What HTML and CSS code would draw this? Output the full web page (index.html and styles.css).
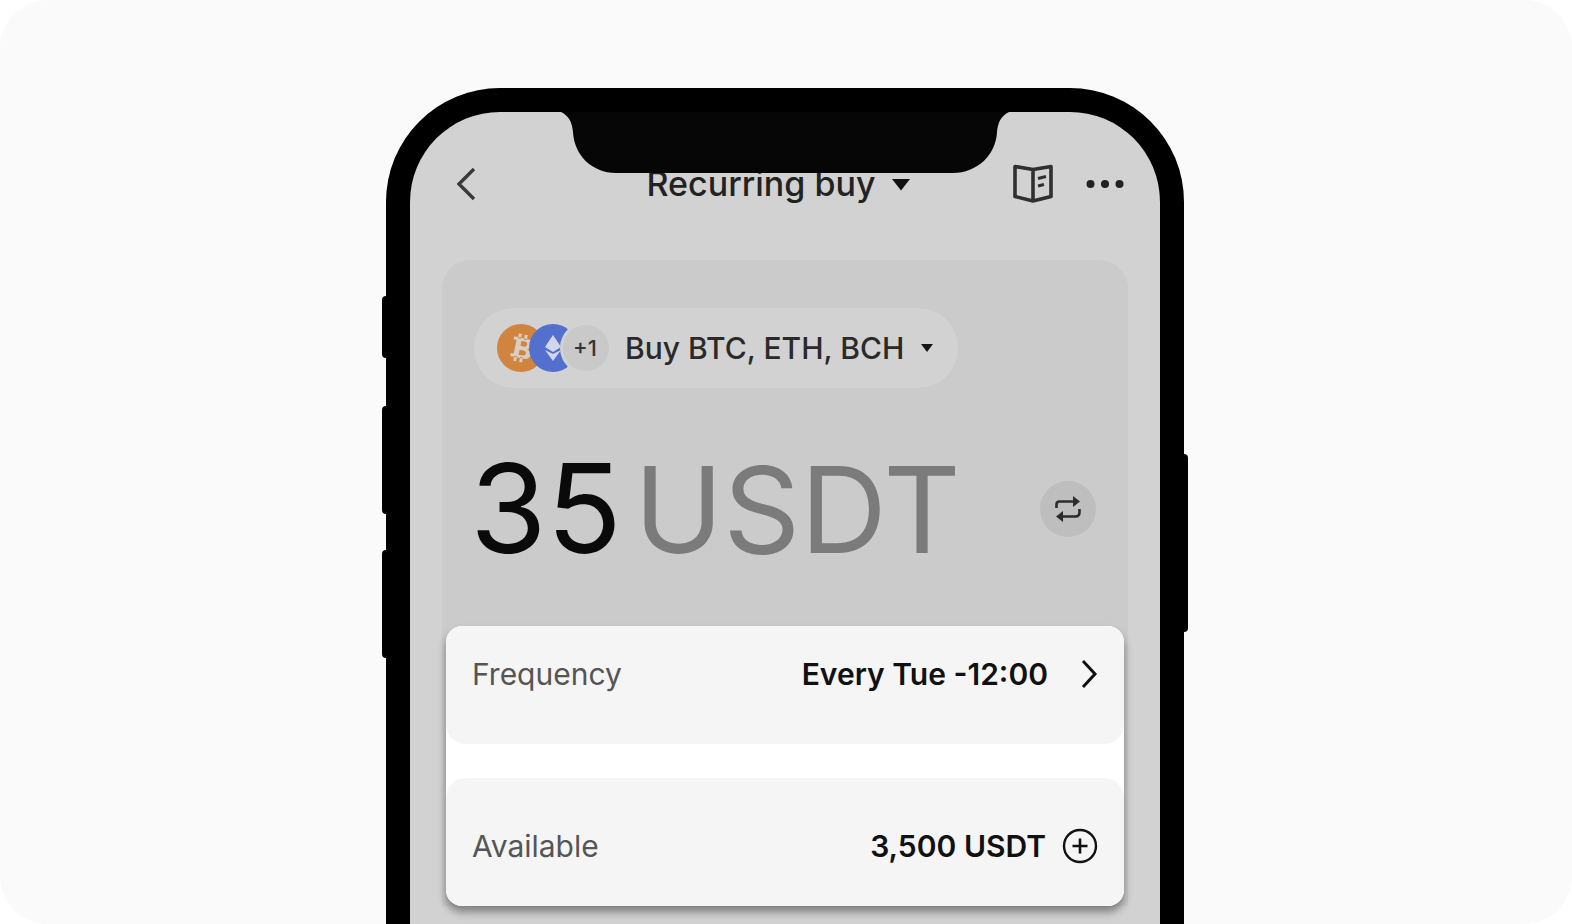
FILE: index.html
```html
<!DOCTYPE html>
<html lang="en">
<head>
<meta charset="utf-8">
<meta name="viewport" content="width=device-width, initial-scale=1">
<title>Recurring buy</title>
<link rel="stylesheet" href="styles.css">
</head>
<body>
<main class="stage">
  <div class="phone">
    <span class="side-key side-key-mute"></span>
    <span class="side-key side-key-up"></span>
    <span class="side-key side-key-down"></span>
    <span class="side-key side-key-power"></span>
    <div class="screen">
      <svg class="notch" viewBox="0 0 448 61" aria-hidden="true"><path d="M0 0C8 4 11 10 12 20C13 43 31 61 55 61H392C416 61 435 43 436 20C437 10 440 4 448 0Z" fill="#060606"/></svg>
      <header class="topbar">
        <button class="icon-button" aria-label="Back">
          <svg width="24" height="36" viewBox="0 0 24 36"><path d="M20 3L5 18L20 33" fill="none" stroke="#3a3a3a" stroke-width="3.400"/></svg>
        </button>
        <button class="title-button">Recurring buy
          <svg width="20" height="13" viewBox="0 0 20 13"><path d="M1 1H19L10 12.500Z" fill="#111"/></svg>
        </button>
        <div class="topbar-actions">
          <button class="icon-button" aria-label="Guide">
            <svg width="42" height="40" viewBox="0 0 42 40"><g fill="none" stroke="#303030" stroke-width="3.600" stroke-linejoin="round"><path d="M21 5.500L3 2.500V32.500L21 37L39 32.500V2.500ZM21 5.500V37"/><path d="M26 14.500L34 12.500M26 22L32 20.500" stroke-width="3.200"/></g></svg>
          </button>
          <button class="icon-button" aria-label="More">
            <svg width="38" height="12" viewBox="0 0 38 12"><g fill="#222"><circle cx="4.500" cy="6" r="4"/><circle cx="19" cy="6" r="4"/><circle cx="33.500" cy="6" r="4"/></g></svg>
          </button>
        </div>
      </header>
      <section class="panel">
        <button class="coin-picker">
          <span class="coins">
            <svg width="114" height="52" viewBox="0 0 114 52" aria-hidden="true">
              <circle cx="26" cy="26" r="24" fill="#d0843f"/>
              <path transform="rotate(12 26 26)" d="M17 16H31C38 16 38 25 32 26C39 27 38 36 31 36H17V33H20V19H17ZM25 19V24H29C32 24 32 19 29 19ZM25 28V33H29C33 33 33 28 29 28ZM21 12H24V17H21ZM27 12H30V17H27ZM21 35H24V40H21ZM27 35H30V40H27Z" fill="#d8cec4" fill-rule="evenodd"/>
              <circle cx="58" cy="26" r="24" fill="#5470cf"/>
              <path d="M58 13L66 25L58 30L50 25ZM50 28L58 32L66 28L58 39Z" fill="#d2d7e8"/>
              <circle cx="91" cy="26" r="26" fill="#d2d2d2"/>
              <circle cx="91" cy="26" r="23" fill="#c9c9c9"/>
            </svg>
            <span class="coin-count">+1</span>
          </span>
          Buy BTC, ETH, BCH
          <svg width="14" height="10" viewBox="0 0 14 10"><path d="M1 1H13L7 9Z" fill="#161616"/></svg>
        </button>
        <div class="amount-row">
          <p class="amount">35<span class="currency">USDT</span></p>
          <button class="swap" aria-label="Switch currency">
            <svg width="30" height="30" viewBox="0 0 30 30"><g fill="none" stroke="#2c2c2c" stroke-width="2.600"><path d="M3.500 14V10.500Q3.500 7.500 6.500 7.500H22M26.500 15V18C26.500 21 25 22.500 22.500 22.500H8"/></g><path d="M20 2L27 7.500L20 13ZM10 17L3 22.500L10 28Z" fill="#2c2c2c"/></svg>
          </button>
        </div>
        <div class="card">
          <div class="row row-frequency">
            <span class="label">Frequency</span>
            <button class="value value-frequency">Every Tue -12:00
              <svg width="18" height="30" viewBox="0 0 18 30"><path d="M3 2L15 15L3 28" fill="none" stroke="#111" stroke-width="3"/></svg>
            </button>
          </div>
          <div class="row row-available">
            <span class="label">Available</span>
            <button class="value value-available">3,500 USDT
              <svg width="36" height="36" viewBox="0 0 36 36"><g fill="none" stroke="#111"><circle cx="18" cy="18" r="16" stroke-width="2.400"/><path d="M18 10.500V25.500M10.500 18H25.500" stroke-width="2.600"/></g></svg>
            </button>
          </div>
        </div>
      </section>
    </div>
  </div>
</main>
</body>
</html>
```
FILE: styles.css
```css
* { box-sizing: border-box; }

body {
  margin: 0;
  background: #fff;
  font-family: Inter, "Liberation Sans", sans-serif;
}

button {
  display: flex;
  align-items: center;
  padding: 0;
  border: 0;
  background: none;
  color: inherit;
  font: inherit;
  white-space: nowrap;
}

svg { display: block; flex: none; }

.stage {
  height: 100vh;
  padding: 88px 18px 0 16px;
  overflow: hidden;
  border-radius: 48px;
  background: #fafafa;
}

.phone {
  position: relative;
  max-width: 798px;
  min-height: 100vh;
  margin: 0 auto;
  padding: 24px 24px 0;
  border-radius: 114px 114px 0 0;
  background: #000;
}

.side-key {
  position: absolute;
  left: -4px;
  width: 8px;
  border-radius: 4px;
  background: #000;
}

.side-key-mute { top: 208px; height: 62px; }
.side-key-up { top: 318px; height: 108px; }
.side-key-down { top: 462px; height: 108px; }
.side-key-power { top: 366px; right: -4px; left: auto; height: 178px; }

.screen {
  position: relative;
  min-height: 100vh;
  padding: 0 32px;
  border-radius: 90px 90px 0 0;
  background: #d2d2d2;
}

.notch {
  position: absolute;
  z-index: 1;
  top: 0;
  left: 50%;
  width: 448px;
  transform: translateX(-50%);
}

.topbar {
  display: grid;
  grid-template-columns: 1fr auto 1fr;
  align-items: center;
  height: 148px;
  padding: 0 4px 4px 12px;
}

.title-button {
  gap: 16px;
  margin-right: 20px;
  color: #222;
  font-size: 34px;
  font-weight: 500;
  line-height: 40px;
}

.topbar-actions {
  display: flex;
  align-items: center;
  justify-content: flex-end;
  gap: 32px;
}

.panel {
  padding: 48px 4px 0;
  border-radius: 28px 28px 0 0;
  background: #cbcbcb;
}

.coin-picker {
  gap: 16px;
  height: 80px;
  margin-left: 28px;
  padding: 0 24px 0 21px;
  border-radius: 40px;
  background: #d2d2d2;
  color: #2a2a2a;
  font-size: 30px;
  font-weight: 500;
}

.coins { position: relative; }

.coin-count {
  position: absolute;
  top: 12px;
  right: 8px;
  width: 32px;
  color: #333;
  font-size: 22px;
  line-height: 28px;
  text-align: center;
}

.amount-row {
  display: flex;
  align-items: center;
  justify-content: space-between;
  height: 238px;
  padding: 4px 28px 0 24px;
}

.amount {
  display: flex;
  align-items: baseline;
  gap: 12px;
  margin: 0;
  color: #0a0a0a;
  font-size: 124px;
  line-height: 148px;
}

.currency {
  color: #7b7b7b;
  font-size: 120px;
}

.swap {
  justify-content: center;
  width: 56px;
  height: 56px;
  border-radius: 50%;
  background: #bebebe;
}

.card {
  display: flex;
  flex-direction: column;
  gap: 34px;
  overflow: hidden;
  border-radius: 16px;
  background: #fff;
  box-shadow: 0 6px 8px rgba(0, 0, 0, 0.4);
}

.row {
  display: flex;
  align-items: center;
  justify-content: space-between;
  padding: 0 26px;
  background: #f5f5f5;
  font-size: 30px;
  line-height: 40px;
}

.row-frequency {
  height: 118px;
  padding-bottom: 22px;
  border-radius: 0 0 20px 20px;
}

.row-available {
  height: 128px;
  padding-top: 8px;
  border-radius: 20px 20px 0 0;
}

.label { color: #555; }
.value { color: #111; font-weight: 600; }
.value-frequency { gap: 32px; }
.value-available { gap: 16px; }
```
